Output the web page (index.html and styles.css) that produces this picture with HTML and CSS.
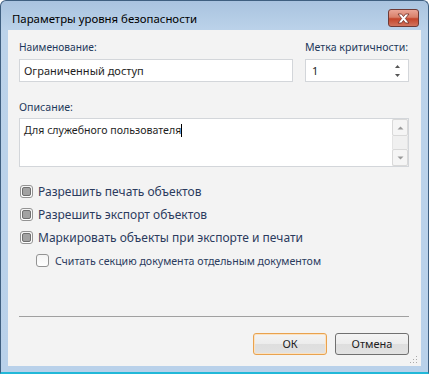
FILE: index.html
```html
<!DOCTYPE html>
<html>
<head>
<meta charset="utf-8">
<link rel="stylesheet" href="styles.css">
</head>
<body>
<div class="window">
  <div class="titlebar">
    <span class="title">Параметры уровня безопасности</span>
    <span class="close">
      <svg width="17" height="11" viewBox="0 0 17 11"><path d="M3 1 L6.5 1 L8.5 3.6 L10.5 1 L14 1 L10.4 5.5 L14 10 L10.5 10 L8.5 7.4 L6.5 10 L3 10 L6.6 5.5 Z" fill="#fff" stroke="#6b2a22" stroke-width="0.8" stroke-linejoin="round"/></svg>
    </span>
  </div>
  <div class="client">
    <div class="row-top">
      <div class="field name">
        <div class="label">Наименование:</div>
        <div class="input">Ограниченный доступ</div>
      </div>
      <div class="field level">
        <div class="label">Метка критичности:</div>
        <div class="input spin">
          <span>1</span>
          <span class="spinbtns">
            <svg width="5" height="3" viewBox="0 0 5 3"><path d="M0 3 L2.5 0 L5 3 Z" fill="#555"/></svg>
            <svg width="5" height="3" viewBox="0 0 5 3"><path d="M0 0 L2.5 3 L5 0 Z" fill="#555"/></svg>
          </span>
        </div>
      </div>
    </div>
    <div class="field desc">
      <div class="label">Описание:</div>
      <div class="textarea">
        <div class="ta-text">Для служебного пользователя<span class="caret"></span></div>
        <div class="vscroll">
          <span class="sbtn"><svg width="7" height="4" viewBox="0 0 7 4"><path d="M0.5 3.5 L3.5 0.5 L6.5 3.5 Z" fill="#9a9a9a"/></svg></span>
          <span class="strack"></span>
          <span class="sbtn"><svg width="7" height="4" viewBox="0 0 7 4"><path d="M0.5 0.5 L3.5 3.5 L6.5 0.5 Z" fill="#9a9a9a"/></svg></span>
        </div>
      </div>
    </div>
    <div class="checks">
      <div class="check"><span class="box on"><span class="mark"></span></span><span>Разрешить печать объектов</span></div>
      <div class="check"><span class="box on"><span class="mark"></span></span><span>Разрешить экспорт объектов</span></div>
      <div class="check"><span class="box on"><span class="mark"></span></span><span>Маркировать объекты при экспорте и печати</span></div>
      <div class="check sub"><span class="box"></span><span>Считать секцию документа отдельным документом</span></div>
    </div>
    <div class="sep"></div>
    <div class="buttons">
      <span class="btn default">ОК</span>
      <span class="btn">Отмена</span>
    </div>
    <span class="grip">
      <svg width="8" height="8" viewBox="0 0 8 8" fill="#a9a9a9"><rect x="6" y="0" width="1" height="1"/><rect x="3" y="3" width="1" height="1"/><rect x="6" y="3" width="1" height="1"/><rect x="0" y="6" width="1" height="1"/><rect x="3" y="6" width="1" height="1"/><rect x="6" y="6" width="1" height="1"/></svg>
    </span>
  </div>
</div>
</body>
</html>
```
FILE: styles.css
```css
html, body {
  margin: 0;
  padding: 0;
  background: #ffffff;
}
body {
  font-family: "Noto Sans", "Open Sans", sans-serif;
  font-size: 11px;
}
.window {
  width: 429px;
  height: 374px;
  box-sizing: border-box;
  border: 1px solid #3f5f80;
  border-bottom: 2px solid #22b8d8;
  border-radius: 6px 6px 0 0;
  background: linear-gradient(to bottom, #a9c3df 0px, #bcd3ea 30px, #b9d1ea 100%);
  display: flex;
  flex-direction: column;
}
.titlebar {
  height: 29px;
  display: flex;
  align-items: flex-start;
  justify-content: space-between;
  padding: 0 9px 0 11px;
}
.title {
  color: #000;
  font-size: 11.4px;
  line-height: 16px;
  margin-top: 10px;
}
.close {
  margin-top: 8px;
  width: 31px;
  height: 18px;
  box-sizing: border-box;
  border: 1px solid #6e3a36;
  border-radius: 3px;
  background: linear-gradient(to bottom, #eaa596 0%, #d9806a 45%, #c4442a 55%, #d2745e 100%);
  display: flex;
  align-items: center;
  justify-content: center;
}
.close svg { display: block; }
.client {
  position: relative;
  margin: 0 7px 0 7px;
  height: 336px;
  box-sizing: border-box;
  background: #f3f3f3;
  padding: 9px 12px 0 11px;
  color: #1e395b;
}
.label {
  font-size: 10.6px;
  line-height: 16px;
  height: 16px;
  margin-bottom: 4px;
  white-space: nowrap;
}
.field.name .label { font-size: 10.2px; }
.row-top {
  display: flex;
  gap: 12px;
}
.field.name { width: 274px; }
.field.level { width: 104px; }
.input {
  height: 23px;
  box-sizing: border-box;
  border: 1px solid #d3d6da;
  background: #fff;
  color: #1e1e1e;
  padding: 0 4px;
  line-height: 21px;
  display: flex;
  align-items: center;
}
.input.spin { justify-content: space-between; padding: 0 8px 0 6px; }
.spinbtns {
  display: flex;
  flex-direction: column;
  gap: 6px;
}
.spinbtns svg { display: block; }
.desc { margin-top: 17px; }
.desc .label { margin-bottom: 3px; }
.textarea {
  height: 49px;
  box-sizing: border-box;
  border: 1px solid #d3d6da;
  background: #fff;
  display: flex;
}
.ta-text {
  flex: 1;
  padding: 3px 4px 2px;
  color: #1e1e1e;
  font-size: 10.6px;
  line-height: 16px;
}
.caret {
  display: inline-block;
  width: 1px;
  height: 13px;
  background: #000;
  vertical-align: -3px;
}
.vscroll {
  width: 16px;
  display: flex;
  flex-direction: column;
  background: #f0f0f0;
}
.sbtn {
  height: 17px;
  box-sizing: border-box;
  border: 1px solid #d9d9d9;
  border-radius: 2px;
  background: #f5f5f5;
  display: flex;
  align-items: center;
  justify-content: center;
}
.sbtn svg { display: block; }
.strack { flex: 1; border-left: 1px solid #e4e4e4; border-right: 1px solid #e4e4e4; }
.checks {
  margin-top: 13px;
  display: flex;
  flex-direction: column;
}
.check {
  height: 23px;
  display: flex;
  align-items: center;
  gap: 5px;
  padding-left: 1px;
  color: #2b3b5e;
  font-size: 12px;
  white-space: nowrap;
}
.check.sub { padding-left: 17px; gap: 6px; font-size: 10.6px; }
.box {
  width: 13px;
  height: 13px;
  box-sizing: border-box;
  border: 1px solid #939393;
  border-radius: 3px;
  background: linear-gradient(to bottom, #f4f4f4, #ffffff);
  display: flex;
  align-items: center;
  justify-content: center;
}
.mark {
  width: 9px;
  height: 9px;
  box-sizing: border-box;
  border: 1px solid #6f6f6f;
  border-radius: 2px;
  background: #a2a2a2;
}
.sep {
  margin-top: 44px;
  height: 1px;
  background: #a0a0a0;
}
.buttons {
  margin-top: 16px;
  display: flex;
  justify-content: flex-end;
  gap: 8px;
}
.btn {
  width: 74px;
  height: 22px;
  box-sizing: border-box;
  border: 1px solid #707070;
  border-radius: 3px;
  background: linear-gradient(to bottom, #f4f4f4 0%, #ececec 50%, #dedede 51%, #e2e2e2 100%);
  color: #1e1e1e;
  display: flex;
  align-items: center;
  justify-content: center;
  line-height: 16px;
}
.btn.default {
  border-color: #e9a24e;
  box-shadow: inset 0 0 0 1px #fbe2c2;
}
.grip {
  position: absolute;
  right: 3px;
  bottom: 2px;
  display: block;
  line-height: 0;
}
```
